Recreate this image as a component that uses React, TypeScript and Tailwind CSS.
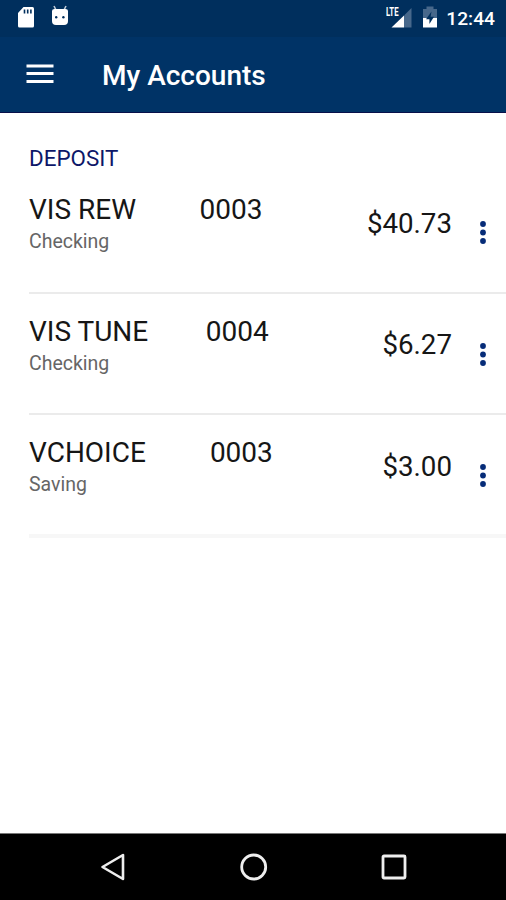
// ============================================
// Accounts Screen
// Deposit account list with system bars
// ============================================

import { clsx } from 'clsx';

interface Account {
  name: string;
  number: string;
  type: string;
  balance: string;
  gap: string;
}

const ACCOUNTS: Account[] = [
  { name: 'VIS REW', number: '0003', type: 'Checking', balance: '$40.73', gap: 'ml-[63.5px]' },
  { name: 'VIS TUNE', number: '0004', type: 'Checking', balance: '$6.27', gap: 'ml-[57.5px]' },
  { name: 'VCHOICE', number: '0003', type: 'Saving', balance: '$3.00', gap: 'ml-[64px]' },
];

function StatusBar() {
  return (
    <div className="flex h-[37px] items-start justify-between bg-[#002f5d] pl-[17px] pr-[11px]">
      <div className="flex pt-[5px]">
        {/* SD card */}
        <svg width="18" height="24" viewBox="0 0 18 24">
          <path d="M6.5 2H15.5Q17 2 17 3.5V21Q17 22.5 15.5 22.5H2.5Q1 22.5 1 21V8Z" fill="#fff" />
          <path d="M7.5 4.5V8.5M10.7 4.5V8.5M13.9 4.5V8.5" stroke="#002f5d" strokeWidth="1.6" />
        </svg>
        {/* Android head */}
        <svg className="ml-[15.5px]" width="18" height="24" viewBox="0 0 18 24">
          <path d="M3 1L5 5M15 1L13 5" stroke="#fff" strokeOpacity=".75" strokeWidth="1.6" />
          <path d="M1 6Q1 4 3.5 4H14.5Q17 4 17 6V16Q17 20 13 20H5Q1 20 1 16Z" fill="#fff" />
          <circle cx="5.2" cy="12.2" r="1.2" fill="#002f5d" />
          <circle cx="12.4" cy="12.2" r="1.2" fill="#002f5d" />
        </svg>
      </div>
      <div className="flex pt-[5px]">
        {/* LTE signal */}
        <div className="relative h-6 w-[27px]">
          <svg width="27" height="24" viewBox="0 0 27 24">
            <path d="M25.5 3V22.5H18V10.5Z" fill="#47688b" />
            <path d="M18 10.5V22.5H5.5Z" fill="#fff" />
          </svg>
          <span className="absolute left-0 top-px origin-left scale-x-[.62] text-[12.5px] font-bold leading-[12px]">
            LTE
          </span>
        </div>
        {/* Charging battery */}
        <svg className="ml-[9px]" width="16" height="24" viewBox="0 0 16 24">
          <path d="M4.5 1.5H11.5V4H15V13H1V4H4.5Z" fill="#47688b" />
          <path d="M1 13H15V22.5H1Z" fill="#fff" />
          <path d="M9.5 6.5L4 14.2H7.4V19L12 11.8H8.6Z" fill="#002f5d" />
        </svg>
        <span className="ml-[8.5px] text-[19.2px] font-medium leading-[27px]">12:44</span>
      </div>
    </div>
  );
}

function AppBar() {
  return (
    <div className="flex h-[76px] items-center border-b border-[#08104a] bg-[#003366] pl-[26px]">
      <svg width="28" height="22" viewBox="0 0 28 22" className="-mt-0.5">
        <path d="M.5 3H27.5M.5 10.5H27.5M.5 18.5H27.5" stroke="#fff" strokeWidth="3" />
      </svg>
      <h1 className="ml-[48px] mt-[3px] text-[28px] font-medium leading-8">My Accounts</h1>
    </div>
  );
}

function AccountRow({ account, last }: { account: Account; last: boolean }) {
  return (
    <li
      className={clsx(
        'flex justify-between',
        last ? 'h-[123px] border-b-4 border-[#f7f7f7]' : 'h-[121.5px] border-b-2 border-[#ebebeb]'
      )}
    >
      <div className="pt-[22px]">
        <div className="flex text-[28px] leading-8 text-[#161616]">
          <span>{account.name}</span>
          <span className={account.gap}>{account.number}</span>
        </div>
        <p className="mt-1 text-[19.5px] leading-6 text-[#666]">{account.type}</p>
      </div>
      <div className="flex items-start pr-[19px]">
        <span className="pt-[35.5px] text-[27.7px] leading-8 text-[#161616]">{account.balance}</span>
        <svg className="ml-[27px] mt-12" width="8" height="25" viewBox="0 0 8 25">
          <circle cx="4" cy="4" r="2.9" fill="#062c78" />
          <circle cx="4" cy="12.5" r="2.9" fill="#062c78" />
          <circle cx="4" cy="21" r="2.9" fill="#062c78" />
        </svg>
      </div>
    </li>
  );
}

function NavigationBar() {
  return (
    <div className="flex h-[67px] items-center justify-between border-t border-[#777] bg-black pl-[99px] pr-[98px]">
      <svg width="28" height="28" viewBox="0 0 28 28">
        <path d="M24 2V26L3.5 14Z" fill="none" stroke="#eee" strokeWidth="2.6" strokeLinejoin="round" />
      </svg>
      <svg width="28" height="28" viewBox="0 0 28 28">
        <circle cx="13.7" cy="14" r="12" fill="none" stroke="#eee" strokeWidth="2.8" />
      </svg>
      <svg width="28" height="28" viewBox="0 0 28 28">
        <rect x="3" y="3" width="22" height="22" rx="1" fill="none" stroke="#eee" strokeWidth="2.8" />
      </svg>
    </div>
  );
}

export default function App() {
  return (
    <div className="flex h-[900px] w-[506px] flex-col overflow-hidden bg-white font-['Roboto',sans-serif]">
      <header className="text-white">
        <StatusBar />
        <AppBar />
      </header>

      <main className="flex-1 pl-[29px] pt-[31px]">
        <h2 className="text-[22.4px] leading-7 text-[#0d1768]">DEPOSIT</h2>
        <ul>
          {ACCOUNTS.map((account, index) => (
            <AccountRow key={account.name} account={account} last={index === ACCOUNTS.length - 1} />
          ))}
        </ul>
      </main>

      <NavigationBar />
    </div>
  );
}
